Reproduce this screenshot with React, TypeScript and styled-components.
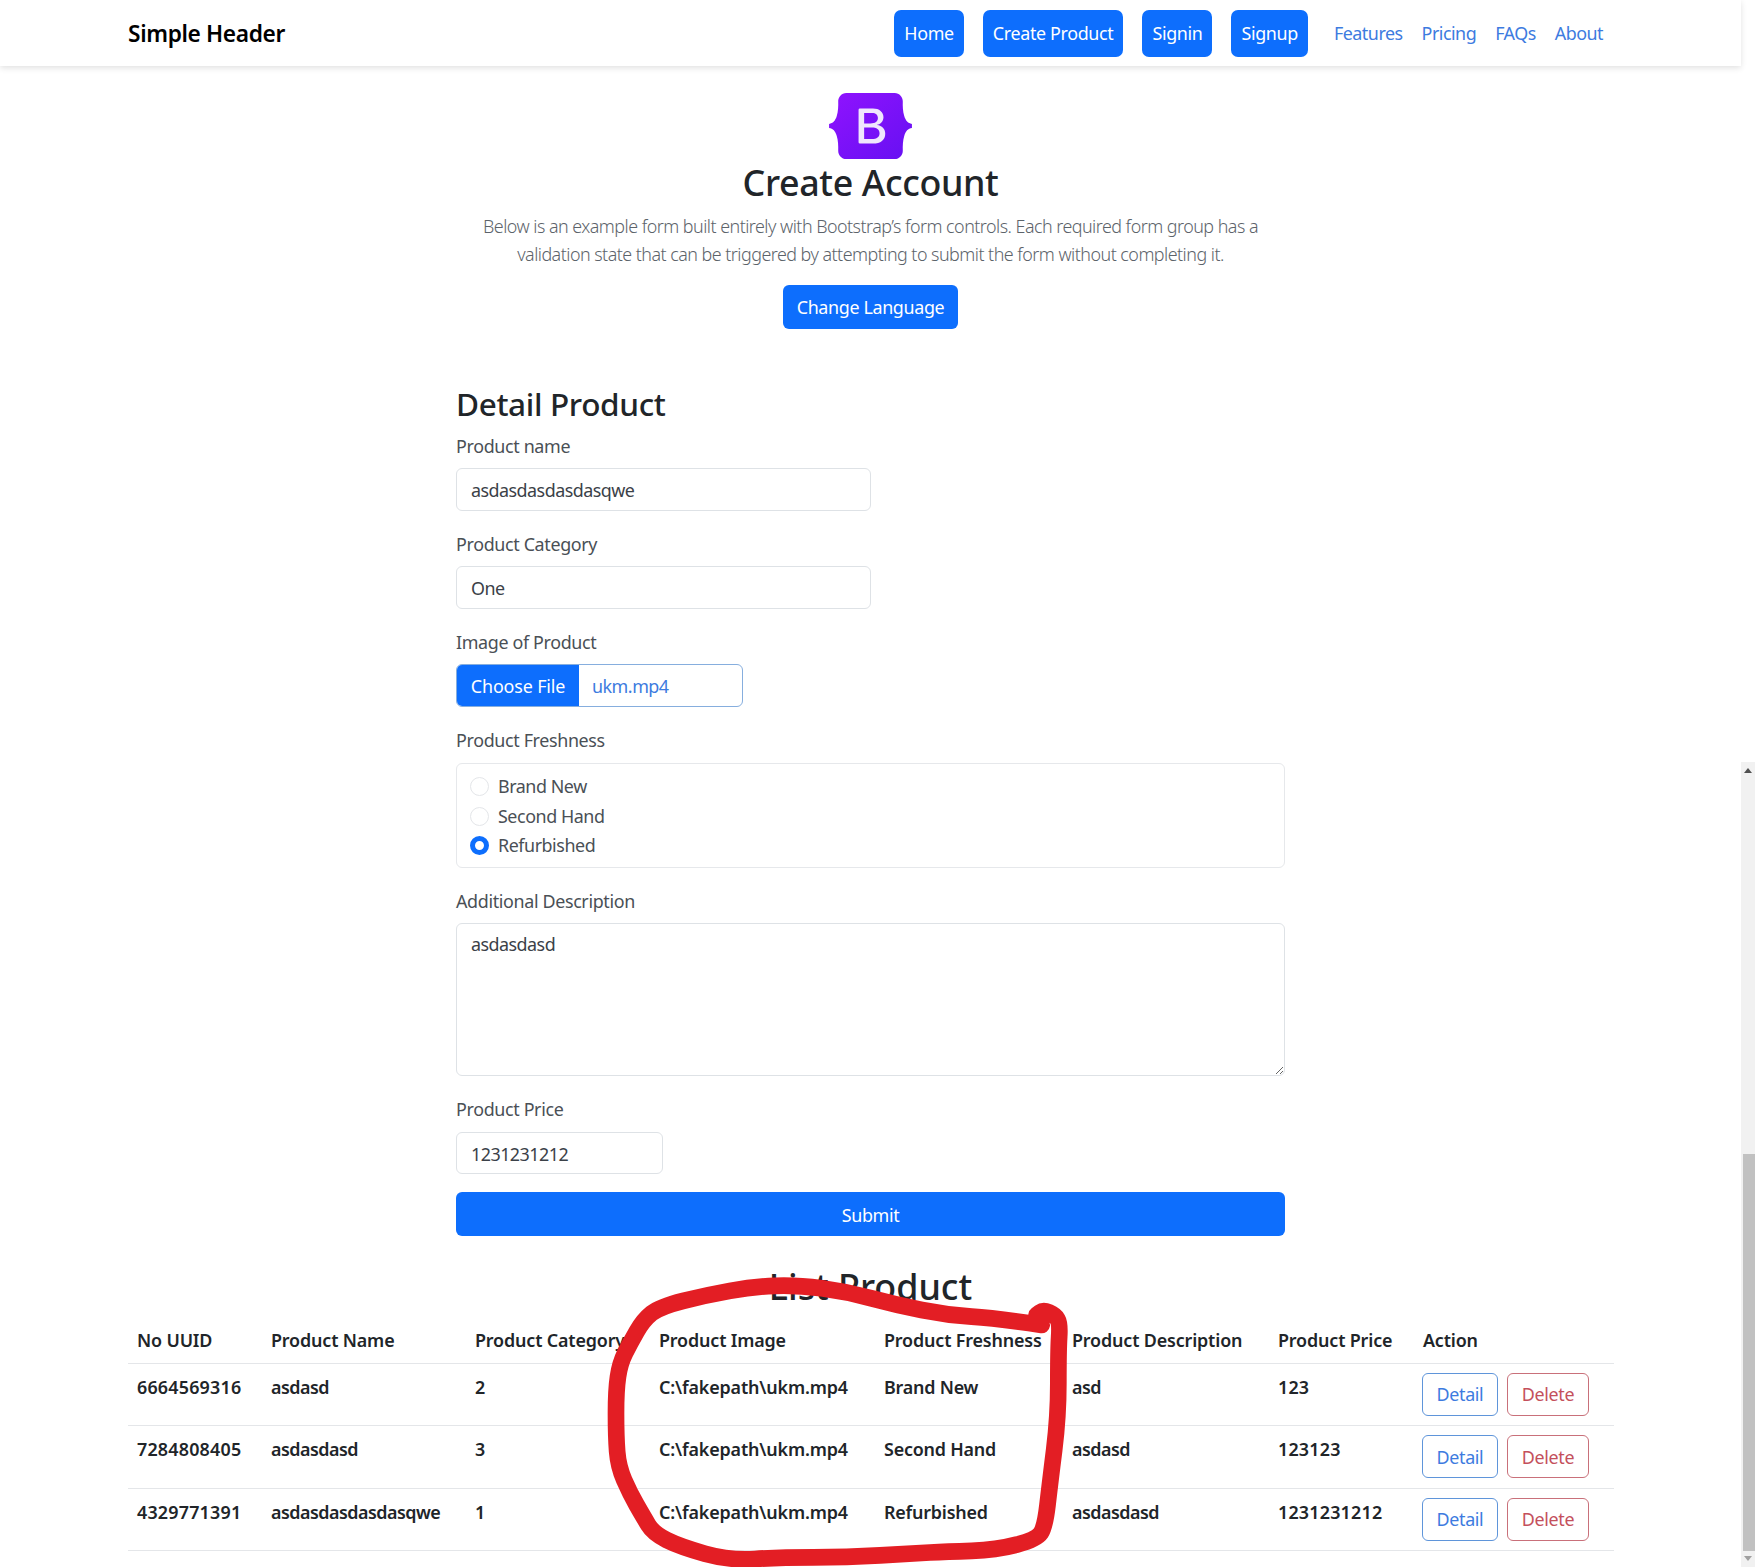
import React from 'react';
import styled, { createGlobalStyle } from 'styled-components';

const GlobalStyle = createGlobalStyle`
  html, body {
    margin: 0;
    padding: 0;
    background: #fff;
    overflow: hidden;
  }
  body {
    font-family: "Noto Sans", "Open Sans", sans-serif;
    font-size: 17.9px;
    line-height: 27px;
    color: #212529;
    letter-spacing: -0.35px;
  }
  * {
    box-sizing: border-box;
  }
`;

const Page = styled.div`
  position: relative;
  width: 1755px;
  height: 1567px;
  overflow: hidden;
`;

const Content = styled.div`
  width: 1741px;
`;

const Header = styled.header`
  height: 66px;
  padding: 10px 138px 0 128px;
  display: flex;
  align-items: flex-start;
  justify-content: space-between;
  box-shadow: 0 2px 6px rgba(0, 0, 0, 0.12);
`;

const Brand = styled.div`
  font-size: 22.7px;
  font-weight: 600;
  line-height: 47px;
  color: #000;
`;

const Nav = styled.nav`
  display: flex;
  align-items: flex-start;
`;

const NavButton = styled.a`
  height: 47px;
  padding: 0 10px;
  margin-right: 19px;
  display: flex;
  align-items: center;
  background: #0d6efd;
  border-radius: 7px;
  color: #fff;
  font-size: 17.9px;
`;

const NavLink = styled.a<{ $first?: boolean }>`
  height: 47px;
  margin-left: ${(p) => (p.$first ? '7px' : '19px')};
  display: flex;
  align-items: center;
  color: #3d7be0;
  letter-spacing: -0.5px;
`;

const Hero = styled.section`
  padding-top: 27px;
  display: flex;
  flex-direction: column;
  align-items: center;
`;

const Logo = styled.svg`
  width: 83px;
  height: 66px;
`;

const Title = styled.h1`
  margin: 2px 0 0;
  font-size: 35.8px;
  font-weight: 500;
  line-height: 43px;
`;

const Lead = styled.p`
  width: 790px;
  margin: 8px 0 0;
  font-size: 17.9px;
  font-weight: 300;
  line-height: 28px;
  letter-spacing: -0.52px;
  text-align: center;
  color: #5c636a;
`;

const Button = styled.button`
  height: 43.5px;
  padding: 2px 0 0;
  border: 0;
  border-radius: 6px;
  background: #0d6efd;
  color: #fff;
  font: inherit;
  letter-spacing: inherit;
  white-space: nowrap;
`;

const LanguageButton = styled(Button)`
  width: 175px;
  margin-top: 17px;
`;

const Form = styled.form`
  width: 829px;
  margin: 56px auto 0;
`;

const FormTitle = styled.h2`
  margin: 0 0 10px;
  font-size: 31.5px;
  font-weight: 500;
  line-height: 38px;
`;

const Field = styled.div`
  margin-bottom: 20.2px;
`;

const PriceField = styled(Field)`
  margin-bottom: 18px;
`;

const Label = styled.label`
  display: block;
  margin-bottom: 8.5px;
  color: #4a5056;
`;

const TextInput = styled.input<{ $width: number }>`
  display: block;
  width: ${(p) => p.$width}px;
  height: 42.5px;
  padding: 2px 14px 0;
  border: 1px solid #dee2e6;
  border-radius: 6px;
  background: #fff;
  color: #3b4148;
  font: inherit;
  letter-spacing: -0.52px;
  outline: none;
`;

const FileInput = styled.div`
  width: 287px;
  height: 42.5px;
  display: flex;
  align-items: stretch;
  border: 1px solid #86aede;
  border-radius: 6px;
  overflow: hidden;
`;

const FileButton = styled.span`
  width: 122px;
  padding-top: 1px;
  display: flex;
  align-items: center;
  justify-content: center;
  background: #0d6efd;
  color: #fff;
  letter-spacing: -0.15px;
`;

const FileName = styled.span`
  padding: 1px 0 0 13px;
  display: flex;
  align-items: center;
  color: #3d7be0;
  letter-spacing: -0.5px;
`;

const RadioBox = styled.div`
  height: 105px;
  padding: 8.5px 13px;
  border: 1px solid #e6e8eb;
  border-radius: 6px;
`;

const RadioRow = styled.div`
  height: 29.5px;
  display: flex;
  align-items: center;
  gap: 9px;
  color: #4a5056;
  letter-spacing: -0.45px;
`;

const RadioDot = styled.span<{ $checked?: boolean }>`
  width: 19px;
  height: 19px;
  border-radius: 50%;
  background: #fff;
  border: ${(p) => (p.$checked ? '5.5px solid #0d6efd' : '1px solid #e4e6e9')};
`;

const TextArea = styled.textarea`
  display: block;
  width: 100%;
  height: 153px;
  padding: 7px 14px;
  border: 1px solid #dee2e6;
  border-radius: 6px;
  color: #3b4148;
  font: inherit;
  letter-spacing: -0.52px;
  outline: none;
`;

const SubmitButton = styled(Button)`
  display: block;
  width: 100%;
`;

const ListTitle = styled.h2`
  margin: 29px 0 10px;
  font-size: 35.8px;
  font-weight: 500;
  line-height: 43px;
  letter-spacing: 0;
  text-align: center;
`;

const Table = styled.table`
  width: 1486px;
  margin-left: 128px;
  border-collapse: collapse;
  table-layout: fixed;
`;

const HeadCell = styled.th`
  height: 45px;
  padding: 9px;
  border-bottom: 1px solid #e4e6e9;
  font-weight: 600;
  letter-spacing: -0.15px;
  text-align: left;
  white-space: nowrap;
  overflow: visible;
`;

const Cell = styled.td<{ $spacing?: number }>`
  height: 62.5px;
  padding: 10px 9px 9px;
  border-bottom: 1px solid #e4e6e9;
  font-weight: 600;
  letter-spacing: ${(p) => p.$spacing ?? -0.2}px;
  vertical-align: top;
  white-space: nowrap;
`;

const Actions = styled.div`
  display: flex;
  gap: 9px;
  margin: -1px 0 0 -1px;
`;

const OutlineButton = styled.button<{ $danger?: boolean }>`
  height: 43px;
  width: ${(p) => (p.$danger ? '82px' : '76px')};
  padding: 0;
  border: 1px solid ${(p) => (p.$danger ? '#c9707a' : '#5f95da')};
  border-radius: 6px;
  background: #fff;
  color: ${(p) => (p.$danger ? '#c4505c' : '#3d7be0')};
  font-family: inherit;
  font-size: 17.9px;
  letter-spacing: -0.35px;
`;

/* things pasted on top of the screenshot: scrollbar and marker scribble */
const ScrollTrack = styled.div`
  position: absolute;
  top: 762px;
  right: 0;
  bottom: 0;
  width: 14px;
  background: #f1f1f1;
`;

const ScrollThumb = styled.div`
  position: absolute;
  top: 392px;
  left: 2px;
  right: 0;
  height: 397px;
  background: #c1c1c1;
`;

const ScrollArrow = styled.div<{ $down?: boolean }>`
  position: absolute;
  left: 3px;
  top: ${(p) => (p.$down ? '794px' : '6px')};
  border-left: 4px solid transparent;
  border-right: 4px solid transparent;
  ${(p) =>
    p.$down
      ? 'border-top: 5px solid #a0a0a0;'
      : 'border-bottom: 5px solid #505050;'}
`;

const Scribble = styled.svg`
  position: absolute;
  left: 580px;
  top: 1250px;
  width: 520px;
  height: 317px;
  overflow: visible;
`;

const scribblePoints: [number, number][] = [
  [1385, 225], [1250, 205], [1100, 195], [950, 165], [800, 125], [650, 105],
  [520, 110], [380, 135], [240, 170], [190, 210], [150, 280], [120, 340],
  [108, 420], [108, 560], [115, 650], [150, 730], [190, 800], [220, 850],
  [300, 890], [450, 932], [600, 922], [800, 922], [1000, 910], [1100, 905],
  [1250, 900], [1370, 868], [1395, 830], [1410, 700], [1435, 500], [1435, 300],
  [1440, 220], [1425, 195], [1390, 180], [1370, 195],
];

const smoothPath = (pts: [number, number][]) => {
  let d = `M${pts[0][0]} ${pts[0][1]}`;
  for (let i = 1; i < pts.length - 1; i++) {
    const mx = (pts[i][0] + pts[i + 1][0]) / 2;
    const my = (pts[i][1] + pts[i + 1][1]) / 2;
    d += ` Q${pts[i][0]} ${pts[i][1]} ${mx} ${my}`;
  }
  const last = pts[pts.length - 1];
  return `${d} L${last[0]} ${last[1]}`;
};

const columns = [134, 204, 184, 225, 188, 206, 145, 200];
const cellSpacing = [0.2, -0.5, -0.2, -0.15, -0.2, -0.5, 0.2];
const headers = [
  'No UUID',
  'Product Name',
  'Product Category',
  'Product Image',
  'Product Freshness',
  'Product Description',
  'Product Price',
  'Action',
];
const rows = [
  ['6664569316', 'asdasd', '2', 'C:\\fakepath\\ukm.mp4', 'Brand New', 'asd', '123'],
  ['7284808405', 'asdasdasd', '3', 'C:\\fakepath\\ukm.mp4', 'Second Hand', 'asdasd', '123123'],
  ['4329771391', 'asdasdasdasdasqwe', '1', 'C:\\fakepath\\ukm.mp4', 'Refurbished', 'asdasdasd', '1231231212'],
];

export default function App() {
  return (
    <Page>
      <GlobalStyle />
      <Content>
        <Header>
          <Brand>Simple Header</Brand>
          <Nav>
            <NavButton>Home</NavButton>
            <NavButton>Create Product</NavButton>
            <NavButton>Signin</NavButton>
            <NavButton>Signup</NavButton>
            <NavLink $first>Features</NavLink>
            <NavLink>Pricing</NavLink>
            <NavLink>FAQs</NavLink>
            <NavLink>About</NavLink>
          </Nav>
        </Header>

        <Hero>
          <Logo viewBox="0 0 118 94">
            <defs>
              <linearGradient id="bs-logo" x1="0" y1="0" x2="1" y2="1">
                <stop offset="0" stopColor="#9013fe" />
                <stop offset="1" stopColor="#6610f2" />
              </linearGradient>
            </defs>
            <path
              fill="url(#bs-logo)"
              fillRule="evenodd"
              d="M24.509 0c-6.733 0-11.715 5.893-11.492 12.284.214 6.14-.064 14.092-2.066 20.577C8.943 39.365 5.547 43.485 0 44.014v5.972c5.547.529 8.943 4.649 10.951 11.153 2.002 6.485 2.28 14.437 2.066 20.577C12.794 88.106 17.776 94 24.51 94H93.5c6.733 0 11.714-5.893 11.491-12.284-.214-6.14.064-14.092 2.066-20.577 2.009-6.504 5.396-10.624 10.943-11.153v-5.972c-5.547-.529-8.934-4.649-10.943-11.153-2.002-6.484-2.28-14.437-2.066-20.577C105.214 5.893 100.233 0 93.5 0H24.508z"
            />
            <path
              fill="#f0e6fd"
              fillRule="evenodd"
              d="M80 57.863C80 66.663 73.436 72 62.543 72H44a2 2 0 01-2-2V24a2 2 0 012-2h18.437c9.083 0 15.044 4.92 15.044 12.474 0 5.302-4.01 10.049-9.119 10.88v.277C75.317 46.394 80 51.21 80 57.863zM60.521 28.34H49.948v14.934h8.905c6.884 0 10.68-2.772 10.68-7.727 0-4.643-3.264-7.207-8.012-7.207zM49.948 49.2v16.458H60.91c7.167 0 10.964-2.876 10.964-8.281 0-5.406-3.903-8.178-11.425-8.178H49.948z"
            />
          </Logo>
          <Title>Create Account</Title>
          <Lead>
            Below is an example form built entirely with Bootstrap’s form controls. Each
            required form group has a validation state that can be triggered by attempting
            to submit the form without completing it.
          </Lead>
          <LanguageButton type="button">Change Language</LanguageButton>
        </Hero>

        <Form>
          <FormTitle>Detail Product</FormTitle>
          <Field>
            <Label>Product name</Label>
            <TextInput $width={415} readOnly value="asdasdasdasdasqwe" />
          </Field>
          <Field>
            <Label>Product Category</Label>
            <TextInput $width={415} readOnly value="One" />
          </Field>
          <Field>
            <Label>Image of Product</Label>
            <FileInput>
              <FileButton>Choose File</FileButton>
              <FileName>ukm.mp4</FileName>
            </FileInput>
          </Field>
          <Field>
            <Label>Product Freshness</Label>
            <RadioBox>
              <RadioRow><RadioDot />Brand New</RadioRow>
              <RadioRow><RadioDot />Second Hand</RadioRow>
              <RadioRow><RadioDot $checked />Refurbished</RadioRow>
            </RadioBox>
          </Field>
          <Field>
            <Label>Additional Description</Label>
            <TextArea readOnly value="asdasdasd" />
          </Field>
          <PriceField>
            <Label>Product Price</Label>
            <TextInput $width={207} readOnly value="1231231212" />
          </PriceField>
          <SubmitButton type="button">Submit</SubmitButton>
        </Form>

        <ListTitle>List Product</ListTitle>
        <Table>
          <colgroup>
            {columns.map((w, i) => (
              <col key={i} width={w} />
            ))}
          </colgroup>
          <thead>
            <tr>
              {headers.map((h) => (
                <HeadCell key={h}>{h}</HeadCell>
              ))}
            </tr>
          </thead>
          <tbody>
            {rows.map((row) => (
              <tr key={row[0]}>
                {row.map((value, i) => (
                  <Cell key={i} $spacing={cellSpacing[i]}>{value}</Cell>
                ))}
                <Cell>
                  <Actions>
                    <OutlineButton type="button">Detail</OutlineButton>
                    <OutlineButton type="button" $danger>Delete</OutlineButton>
                  </Actions>
                </Cell>
              </tr>
            ))}
          </tbody>
        </Table>
      </Content>

      <ScrollTrack>
        <ScrollArrow />
        <ScrollThumb />
        <ScrollArrow $down />
      </ScrollTrack>

      <Scribble viewBox="0 0 1560 951">
        <path
          d={smoothPath(scribblePoints)}
          fill="none"
          stroke="#e31e24"
          strokeWidth="50"
          strokeLinecap="round"
          strokeLinejoin="round"
        />
      </Scribble>
    </Page>
  );
}
